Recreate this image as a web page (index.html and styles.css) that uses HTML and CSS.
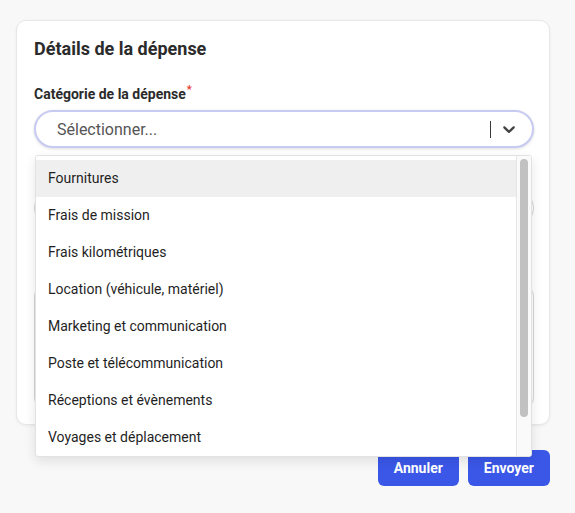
FILE: index.html
```html
<!DOCTYPE html>
<html lang="fr">
<head>
<meta charset="utf-8">
<title>Détails de la dépense</title>
<link rel="stylesheet" href="styles.css">
</head>
<body>
<main class="page">
  <section class="card">
    <h2 class="card-title">Détails de la dépense</h2>

    <div class="field">
      <label class="label">Catégorie de la dépense<span class="req">*</span></label>
      <div class="select-wrap">
        <div class="select">
          <span class="placeholder">Sélectionner...</span>
          <span class="indicators">
            <span class="sep"></span>
            <span class="chev">
              <svg width="20" height="20" viewBox="0 0 20 20" aria-hidden="true"><path fill="#444" d="M4.516 7.548c0.436-0.446 1.043-0.481 1.576 0l3.908 3.747 3.908-3.747c0.533-0.481 1.141-0.446 1.574 0 0.436 0.445 0.408 1.197 0 1.615-0.406 0.418-4.695 4.502-4.695 4.502-0.217 0.223-0.502 0.335-0.787 0.335s-0.57-0.112-0.789-0.335c0 0-4.287-4.084-4.695-4.502s-0.436-1.17 0-1.615z"/></svg>
            </span>
          </span>
        </div>
        <div class="menu">
          <ul class="options">
            <li class="option is-focused">Fournitures</li>
            <li class="option">Frais de mission</li>
            <li class="option">Frais kilométriques</li>
            <li class="option">Location (véhicule, matériel)</li>
            <li class="option">Marketing et communication</li>
            <li class="option">Poste et télécommunication</li>
            <li class="option">Réceptions et évènements</li>
            <li class="option">Voyages et déplacement</li>
          </ul>
          <div class="scrollbar"><div class="thumb"></div></div>
        </div>
      </div>
    </div>

    <div class="input"></div>
    <div class="textarea"></div>
  </section>

  <div class="actions">
    <button class="btn">Annuler</button>
    <button class="btn">Envoyer</button>
  </div>
</main>
</body>
</html>
```

FILE: styles.css
```css
* { box-sizing: border-box; }

html, body {
  margin: 0;
  padding: 0;
  background: #f8f8f8;
}

body {
  font-family: Roboto, "Liberation Sans", Arial, sans-serif;
  color: #2b2b2b;
}

.page {
  padding: 20px 25px 0 16px;
  width: 575px;
}

.card {
  background: #ffffff;
  border: 1px solid #e7e7e7;
  border-radius: 10px;
  box-shadow: 0 1px 3px rgba(0, 0, 0, 0.06);
  padding: 17px 15px 16px 17px;
}

.card-title {
  margin: 0;
  font-size: 18px;
  line-height: 22px;
  font-weight: 700;
  color: #2b2b2b;
}

.field {
  margin-top: 24px;
}

.label {
  display: block;
  font-size: 14px;
  line-height: 20px;
  font-weight: 700;
  color: #2b2b2b;
  margin-bottom: 6px;
}

.req {
  color: #e53935;
  font-size: 11px;
  line-height: 0;
  vertical-align: 6px;
  margin-left: 1px;
  font-weight: 700;
}

.select-wrap {
  position: relative;
}

.select {
  height: 38px;
  border: 2px solid #c7cbf2;
  border-radius: 19px;
  background: #fff;
  box-shadow: 0 1px 3px rgba(0, 0, 0, 0.14);
  display: flex;
  align-items: center;
  padding-left: 21px;
}

.placeholder {
  flex: 1;
  font-size: 16px;
  color: #555;
}

.indicators {
  display: flex;
  align-items: center;
  height: 100%;
}

.sep {
  width: 1px;
  height: 17px;
  background: #3a3a3a;
}

.chev {
  display: flex;
  align-items: center;
  padding: 0 13px 0 8px;
}

.chev svg { display: block; }

.menu {
  position: absolute;
  top: 45px;
  left: 1px;
  right: 2px;
  height: 302px;
  display: flex;
  background: #fff;
  border: 1px solid #e2e2e2;
  border-radius: 3px;
  box-shadow: 0 4px 12px rgba(0, 0, 0, 0.10);
  overflow: hidden;
  z-index: 5;
}

.options {
  flex: 1;
  margin: 0;
  padding: 4px 0 0;
  list-style: none;
  overflow: hidden;
}

.option {
  font-size: 14px;
  line-height: 19px;
  padding: 9px 12px;
  color: #1f1f1f;
}

.option.is-focused {
  background: #efefef;
}

.scrollbar {
  width: 15px;
  background: #fafafa;
  border-left: 1px solid #e6e6e6;
  padding: 3px 3px 0 3px;
}

.thumb {
  width: 8px;
  height: 258px;
  border-radius: 4px;
  background: #c1c1c1;
}

.input {
  margin-top: 42px;
  height: 36px;
  border: 1px solid #d6d6d6;
  border-radius: 18px;
}

.textarea {
  margin-top: 60px;
  height: 122px;
  border: 1px solid #d6d6d6;
  border-radius: 10px;
}

.actions {
  display: flex;
  justify-content: flex-end;
  gap: 9px;
  margin-top: 25px;
}

.btn {
  height: 36px;
  padding: 0 16px;
  border: 0;
  border-radius: 6px;
  background: #3a57e8;
  color: #fff;
  font-family: Roboto, "Liberation Sans", Arial, sans-serif;
  font-size: 14px;
  font-weight: 700;
}
```
